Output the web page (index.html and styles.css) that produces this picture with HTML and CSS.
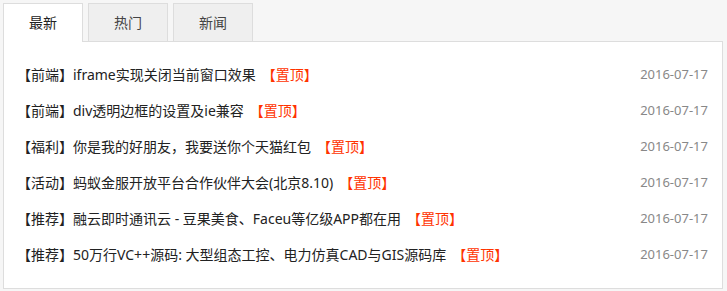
FILE: index.html
```html
<!DOCTYPE html>
<html lang="zh-CN">
<head>
<meta charset="utf-8">
<link rel="stylesheet" href="styles.css">
</head>
<body>
<div class="box">
  <div class="tabs">
    <div class="tab active">最新</div>
    <div class="tab">热门</div>
    <div class="tab">新闻</div>
  </div>
  <ul class="list">
    <li class="row"><span class="title">【前端】iframe实现关闭当前窗口效果<span class="top">【置顶】</span></span><span class="date">2016-07-17</span></li>
    <li class="row"><span class="title">【前端】div透明边框的设置及ie兼容<span class="top">【置顶】</span></span><span class="date">2016-07-17</span></li>
    <li class="row"><span class="title">【福利】你是我的好朋友，我要送你个天猫红包<span class="top">【置顶】</span></span><span class="date">2016-07-17</span></li>
    <li class="row"><span class="title">【活动】蚂蚁金服开放平台合作伙伴大会(北京8.10)<span class="top">【置顶】</span></span><span class="date">2016-07-17</span></li>
    <li class="row"><span class="title">【推荐】融云即时通讯云 - 豆果美食、Faceu等亿级APP都在用<span class="top">【置顶】</span></span><span class="date">2016-07-17</span></li>
    <li class="row"><span class="title">【推荐】50万行VC++源码: 大型组态工控、电力仿真CAD与GIS源码库<span class="top">【置顶】</span></span><span class="date">2016-07-17</span></li>
  </ul>
</div>
</body>
</html>
```
FILE: styles.css
```css
html, body {
  margin: 0;
  padding: 0;
  background: #f6f6f6;
}
body {
  font-family: "Noto Sans", "Noto Sans CJK SC", sans-serif;
  color: #333;
  padding: 3px 4px 0 3px;
}
.box {
  width: 720px;
}
.tabs {
  display: flex;
  gap: 5px;
  height: 38px;
  position: relative;
  z-index: 1;
}
.tab {
  width: 78px;
  height: 37px;
  border: 1px solid #ddd;
  border-bottom: none;
  background: #efefef;
  font-size: 14px;
  line-height: 37px;
  text-align: center;
  color: #444;
}
.tab.active {
  background: #fff;
  height: 38px;
  color: #222;
}
.list {
  list-style: none;
  margin: 0;
  background: #fff;
  border: 1px solid #ddd;
  padding: 14px 14px 16px 13px;
  height: 216px;
}
.row {
  display: flex;
  justify-content: space-between;
  align-items: center;
  height: 36px;
  font-size: 14px;
}
.title {
  color: #222;
}
.top {
  color: #ff3300;
  margin-left: 6px;
}
.date {
  font-size: 13px;
  color: #888;
}
```
